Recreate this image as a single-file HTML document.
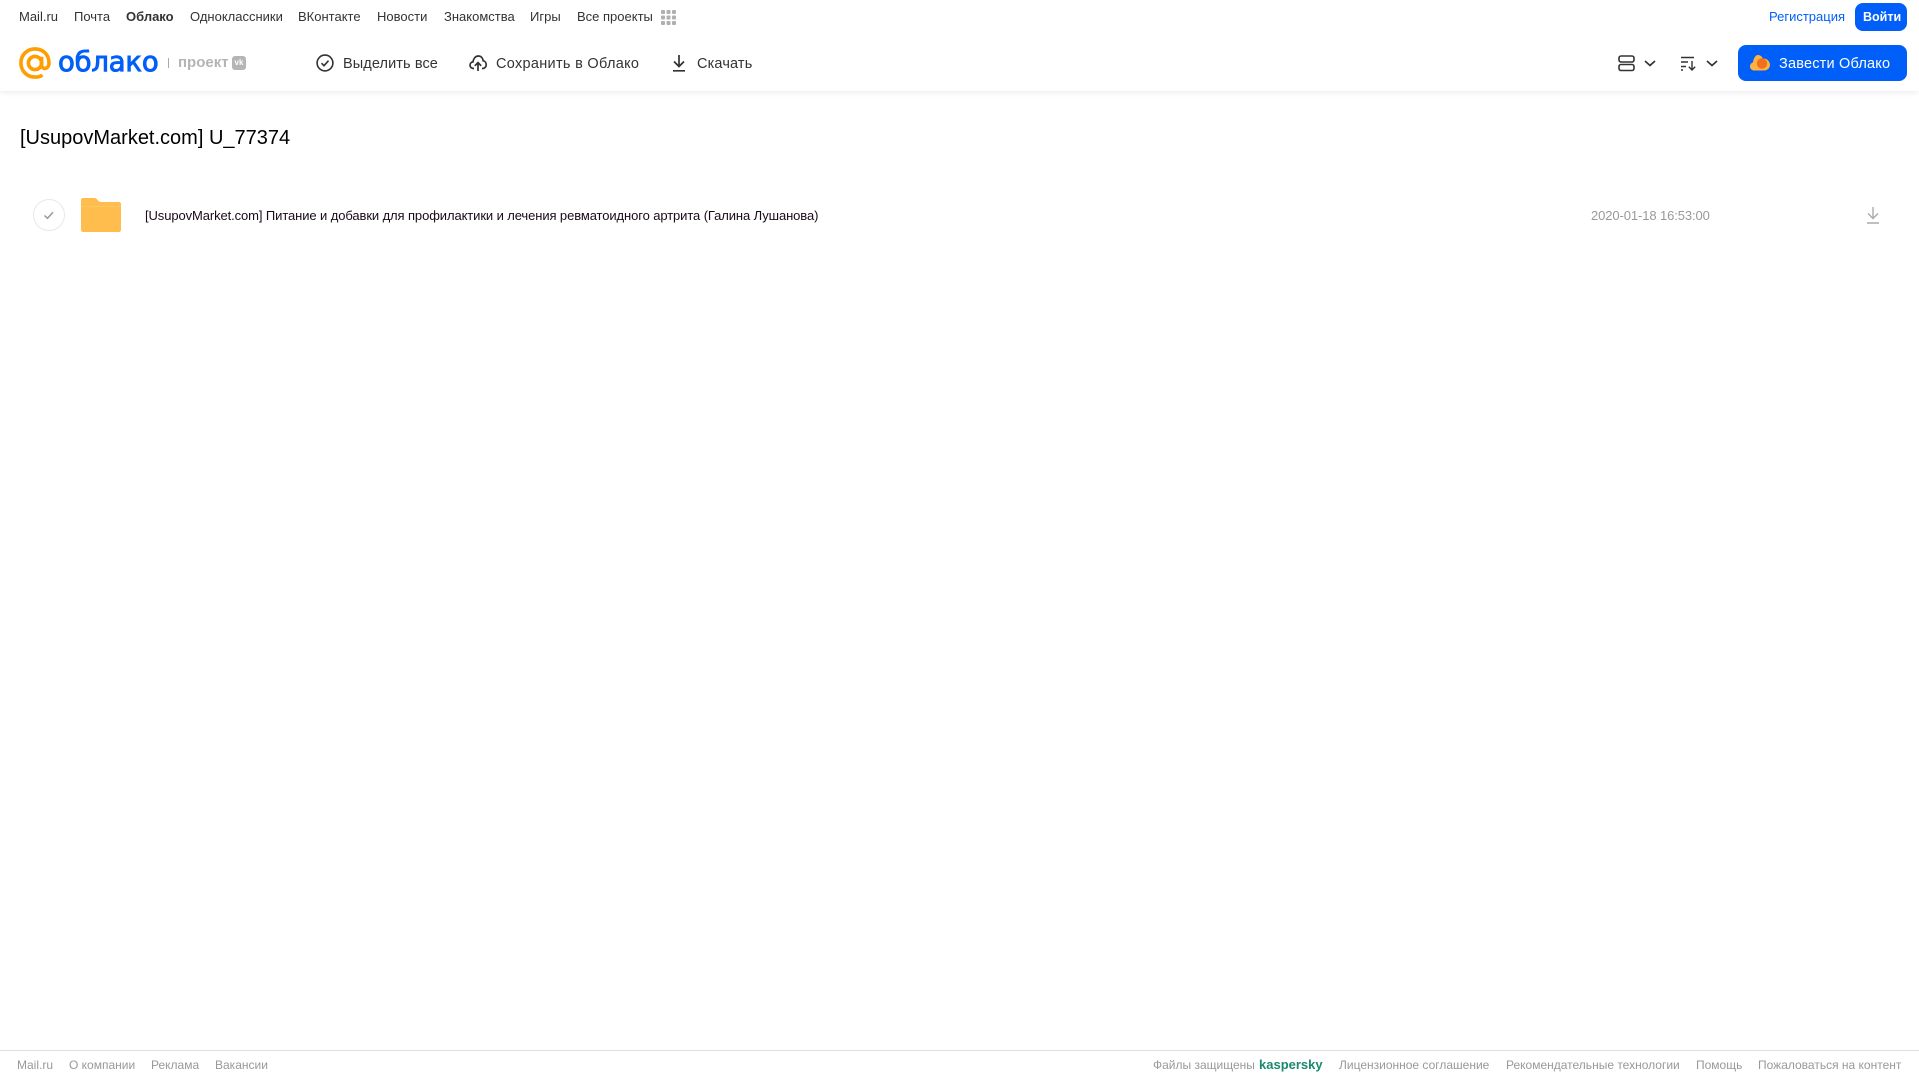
<!DOCTYPE html>
<html lang="ru"><head><meta charset="utf-8"><title>Облако</title>
<style>
html,body{margin:0;padding:0;background:#fff;width:1919px;height:1079px;overflow:hidden;font-family:"Liberation Sans",sans-serif}
.t{position:absolute;white-space:nowrap;line-height:20px;height:20px}
.n{top:7px;font-size:13px;color:#333}
.b{top:54px;font-size:14.5px;color:#333;letter-spacing:.15px}
.f{top:1055px;font-size:12px;color:#999}
svg{position:absolute;overflow:visible}
#hdr{position:absolute;left:0;top:0;width:1919px;height:91px;background:#fff;box-shadow:0 1px 6px rgba(0,0,0,.09)}
</style></head><body>
<div id="hdr"></div>
<span class="t n" style="left:19px">Mail.ru</span>
<span class="t n" style="left:74px">Почта</span>
<span class="t n" style="left:126px;font-weight:bold">Облако</span>
<span class="t n" style="left:190px">Одноклассники</span>
<span class="t n" style="left:298px">ВКонтакте</span>
<span class="t n" style="left:377px">Новости</span>
<span class="t n" style="left:444px">Знакомства</span>
<span class="t n" style="left:530px">Игры</span>
<span class="t n" style="left:577px">Все проекты</span>
<svg style="left:661px;top:10px" width="15" height="15" fill="#b0b0b0"><rect x="0" y="0" width="4" height="4" rx="1"/><rect x="5.500" y="0" width="4" height="4" rx="1"/><rect x="11" y="0" width="4" height="4" rx="1"/><rect x="0" y="5.500" width="4" height="4" rx="1"/><rect x="5.500" y="5.500" width="4" height="4" rx="1"/><rect x="11" y="5.500" width="4" height="4" rx="1"/><rect x="0" y="11" width="4" height="4" rx="1"/><rect x="5.500" y="11" width="4" height="4" rx="1"/><rect x="11" y="11" width="4" height="4" rx="1"/></svg>
<span class="t n" style="left:1769px;color:#005ff9">Регистрация</span>
<div style="position:absolute;left:1855px;top:3px;width:52px;height:28px;background:#005ff9;border-radius:8px"></div>
<span class="t n" style="left:1863px;color:#fff;font-weight:bold;font-size:12.5px">Войти</span>

<svg style="left:19px;top:47px" width="32" height="33" viewBox="0 0 32 33" fill="none" stroke="#ff9e00" stroke-width="3.600"><circle cx="16" cy="16" r="6.600"/><path d="M22.600 9.800v8.200c0 5 7.400 4.600 7.400-2C30 7.500 24 1.900 16 1.900S1.900 8 1.900 16 8 30.100 16 30.100c3.100 0 5.300-.6 7.500-2"/></svg>
<span class="t" style="left:58px;top:45px;height:34px;line-height:34px;font-family:'DejaVu Sans',sans-serif;font-size:27.500px;color:#005ff9;-webkit-text-stroke:.9px #005ff9;letter-spacing:-.2px">облако</span>
<div style="position:absolute;left:168px;top:58px;width:1px;height:10px;background:#aaa"></div>
<span class="t" style="left:178px;top:53px;font-size:15px;font-weight:bold;color:#b4b4b4">проект</span>
<div style="position:absolute;left:232px;top:56px;width:14px;height:14px;border-radius:3px;background:#b5b5b5;color:#fff;font-size:8px;font-weight:bold;line-height:14px;text-align:center">vk</div>

<svg style="left:316px;top:54px" width="18" height="18" viewBox="0 0 18 18" fill="none" stroke="#333" stroke-width="1.600"><circle cx="9" cy="9" r="7.900"/><path d="M5.500 9.200l2.500 2.500 4.500-5"/></svg>
<span class="t b" style="left:343px;letter-spacing:.1px">Выделить все</span>
<svg style="left:469px;top:54px" width="18" height="18" viewBox="0 0 18 18" fill="none" stroke="#333" stroke-width="1.700"><path d="M5 14.500H4.500C2.500 14.500 1 13 1 11.200c0-1.800 1.300-3.100 3-3.300C4.400 4.700 6.400 2 9.300 2c2.700 0 4.500 2 4.900 4.800 2 .2 3 2.200 3 4 0 1.900-1.300 3.700-3.400 3.700H13"/><path d="M9 17V9M5.800 11.800L9 8.600l3.200 3.200"/></svg>
<span class="t b" style="left:496px;letter-spacing:.3px">Сохранить в Облако</span>
<svg style="left:670px;top:54px" width="18" height="18" viewBox="0 0 18 18" fill="none" stroke="#333" stroke-width="1.700"><path d="M9 1v11M4 7.500L9 12.500l5-5M3 16.800h12"/></svg>
<span class="t b" style="left:697px">Скачать</span>

<svg style="left:1618px;top:55px" width="17" height="17" viewBox="0 0 17 17" fill="none" stroke="#333" stroke-width="1.600"><rect x="1" y="1" width="15" height="6" rx="2"/><rect x="1" y="9.500" width="15" height="6" rx="2"/></svg>
<svg style="left:1644px;top:60px" width="12" height="7" viewBox="0 0 12 7" fill="none" stroke="#333" stroke-width="1.700"><path d="M1 1l5 4.500L11 1"/></svg>
<svg style="left:1681px;top:56px" width="16" height="15" viewBox="0 0 16 15" fill="none" stroke="#333" stroke-width="1.400"><path d="M0 1.500h13M0 6h7M0 10.500h5M0 14h2M11 5v9M7.800 10.800L11 14l3.200-3.200"/></svg>
<svg style="left:1706px;top:60px" width="12" height="7" viewBox="0 0 12 7" fill="none" stroke="#333" stroke-width="1.700"><path d="M1 1l5 4.500L11 1"/></svg>

<div style="position:absolute;left:1738px;top:45px;width:169px;height:36px;background:#005ff9;border-radius:8px"></div>
<svg style="left:1750px;top:54px" width="20" height="17" viewBox="0 0 20 17"><path fill="#ffb23f" d="M4 16.500C1.800 16.500 0 14.700 0 12.400c0-1.900 1.300-3.500 3-4C3.400 5 5.200 1 8 1c2.300 0 4 1.500 4.800 3.500 3.800-.5 7.200 2.800 7.200 6.300 0 3.300-2.600 5.700-5.700 5.700z"/><circle cx="12" cy="9.500" r="5.200" fill="#f2701d"/></svg>
<span class="t b" style="left:1779px;color:#fff;letter-spacing:.2px">Завести Облако</span>

<span class="t" style="left:20px;top:126px;height:24px;line-height:25px;font-size:20px;color:#000">[UsupovMarket.com] U_77374</span>

<svg style="left:33px;top:199px" width="32" height="32" viewBox="0 0 32 32" fill="none"><circle cx="16" cy="16" r="15.500" stroke="#e8e8e8"/><path d="M11.500 16.500l3 2.800 5.500-6" stroke="#999" stroke-width="1.500"/></svg>
<svg style="left:81px;top:198px" width="40" height="34" viewBox="0 0 40 34"><path fill="#ffbd4d" d="M2 0h11c2 0 3 1 4 2.500C18 3.500 19 4 20 4h18c1 0 2 1 2 2v26c0 1-1 2-2 2H2c-1 0-2-1-2-2V2C0 1 1 0 2 0z"/><path fill="#ffc65f" d="M0 8h40v1H0z"/></svg>
<span class="t" style="left:145px;top:206px;font-size:13px;letter-spacing:-.1px;color:#1a0a1a">[UsupovMarket.com] Питание и добавки для профилактики и лечения ревматоидного артрита (Галина Лушанова)</span>
<span class="t" style="left:1591px;top:206px;font-size:13px;letter-spacing:-.1px;color:#999">2020-01-18 16:53:00</span>
<svg style="left:1866px;top:207px" width="14" height="17" viewBox="0 0 14 17" fill="none" stroke="#aaa" stroke-width="1.400"><path d="M7 0v11M2 6.500l5 5 5-5M1 16h12"/></svg>

<div style="position:absolute;left:0;top:1050px;width:1919px;height:1px;background:#ddd"></div>
<span class="t f" style="left:17px">Mail.ru</span>
<span class="t f" style="left:69px">О компании</span>
<span class="t f" style="left:151px">Реклама</span>
<span class="t f" style="left:215px">Вакансии</span>
<span class="t f" style="left:1153px">Файлы защищены</span>
<span class="t f" style="left:1259px;font-size:13px;font-weight:bold;color:#1a8a6e">kaspersky</span>
<span class="t f" style="left:1339px">Лицензионное соглашение</span>
<span class="t f" style="left:1506px">Рекомендательные технологии</span>
<span class="t f" style="left:1696px">Помощь</span>
<span class="t f" style="left:1758px">Пожаловаться на контент</span>
</body></html>
